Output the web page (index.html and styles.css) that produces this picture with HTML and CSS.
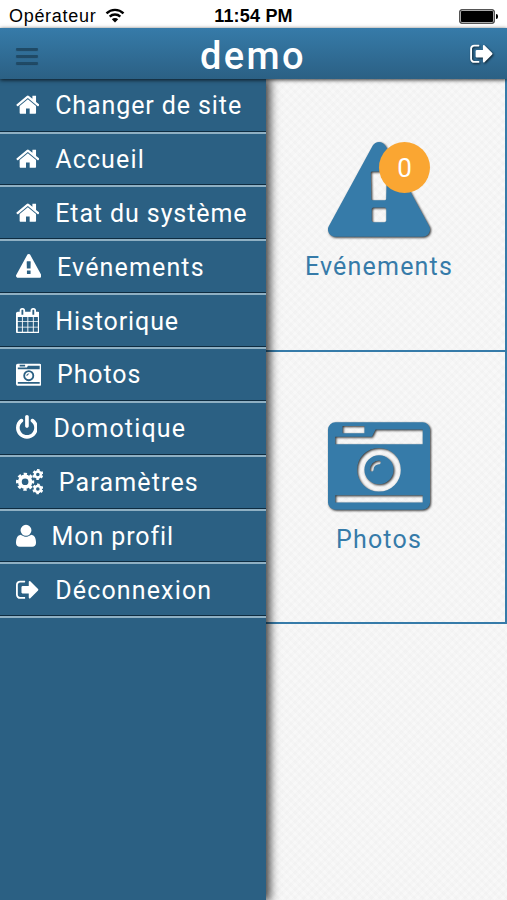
FILE: index.html
```html
<!DOCTYPE html>
<html lang="fr">
<head>
  <meta charset="utf-8">
  <meta name="viewport" content="width=device-width, initial-scale=1">
  <title>demo</title>
  <link rel="stylesheet" href="styles.css">
</head>
<body>
  <svg class="sprite">
    <symbol id="home" viewBox="64 0 1664 1792">
      <path d="M1472 992v480q0 26-19 45t-45 19h-384v-384h-256v384h-384q-26 0-45-19t-19-45v-480q0-1 .5-3t.5-3l575-474 575 474q1 2 1 6zm223-69l-62 74q-8 9-21 11h-3q-13 0-21-7l-692-577-692 577q-12 8-24 7-13-2-21-11l-62-74q-8-10-7-23.5t11-21.5l719-599q32-26 76-26t76 26l244 204v-195q0-14 9-23t23-9h192q14 0 23 9t9 23v408l219 182q10 8 11 21.500t-7 23.500z"/>
    </symbol>
    <symbol id="warning" viewBox="0 0 1792 1792">
      <path d="M1024 1375v-190q0-14-9.500-23.500t-22.500-9.500h-192q-13 0-22.500 9.500t-9.500 23.500v190q0 14 9.500 23.500t22.500 9.500h192q13 0 22.500-9.500t9.500-23.500zm-2-374l10-459q0-12-6-19-9-5-20-5h-228q-11 0-20 5-6 7-6 21l9 457q0 10 10 16.500t24 6.500h193q14 0 23.500-6.500t10.500-16.500zm-14-934l768 1408q35 63-2 126-17 29-46.500 46t-63.500 17h-1536q-34 0-63.500-17t-46.500-46q-37-63-2-126l768-1408q17-31 47-49t65-18 65 18 47 49z"/>
    </symbol>
    <symbol id="calendar" viewBox="64 0 1664 1792">
      <path d="M192 1664h288v-288h-288v288zm352 0h320v-288h-320v288zm-352-352h288v-320h-288v320zm352 0h320v-320h-320v320zm-352-384h288v-288h-288v288zm736 736h320v-288h-320v288zm-384-736h320v-288h-320v288zm768 736h288v-288h-288v288zm-384-352h320v-320h-320v320zm-352-864v-288q0-13-9.500-22.500t-22.500-9.500h-64q-13 0-22.500 9.500t-9.500 22.500v288q0 13 9.500 22.500t22.500 9.500h64q13 0 22.500-9.500t9.500-22.500zm736 864h288v-320h-288v320zm-384-384h320v-288h-320v288zm384 0h288v-288h-288v288zm32-480v-288q0-13-9.500-22.500t-22.500-9.500h-64q-13 0-22.500 9.500t-9.500 22.500v288q0 13 9.500 22.500t22.500 9.500h64q13 0 22.500-9.500t9.500-22.500zm384-64v1280q0 52-38 90t-90 38h-1408q-52 0-90-38t-38-90v-1280q0-52 38-90t90-38h128v-96q0-66 47-113t113-47h64q66 0 113 47t47 113v96h384v-96q0-66 47-113t113-47h64q66 0 113 47t47 113v96h128q52 0 90 38t38 90z"/>
    </symbol>
    <symbol id="camera" viewBox="0 0 1792 1792">
      <path d="M928 832q0-14-9-23t-23-9q-66 0-113 47t-47 113q0 14 9 23t23 9 23-9 9-23q0-40 28-68t68-28q14 0 23-9t9-23zm224 130q0 106-75 181t-181 75-181-75-75-181 75-181 181-75 181 75 75 181zm-1024 574h1536v-128h-1536v128zm1152-574q0-159-112.500-271.500t-271.500-112.500-271.500 112.500-112.500 271.500 112.500 271.500 271.500 112.500 271.500-112.500 112.500-271.500zm-1024-642h384v-128h-384v128zm-128 192h1536v-256h-828l-64 128h-644v128zm1664-256v1280q0 53-37.500 90.500t-90.500 37.500h-1536q-53 0-90.500-37.500t-37.500-90.500v-1280q0-53 37.500-90.500t90.500-37.500h1536q53 0 90.500 37.500t37.500 90.500z"/>
    </symbol>
    <symbol id="power" viewBox="128 0 1536 1792">
      <path d="M1664 896q0 156-61 298t-164 245-245 164-298 61-298-61-245-164-164-245-61-298q0-182 80.500-343t226.500-270q43-32 95.500-25t83.500 50q32 42 24.500 94.500t-49.500 84.500q-98 74-151.500 181t-53.500 228q0 104 40.500 198.500t109.500 163.500 163.500 109.500 198.500 40.500 198.500-40.500 163.500-109.500 109.500-163.500 40.500-198.500q0-121-53.500-228t-151.500-181q-42-32-49.500-84.500t24.500-94.500q31-43 84-50t95 25q146 109 226.500 270t80.500 343zm-640-768v640q0 52-38 90t-90 38-90-38-38-90v-640q0-52 38-90t90-38 90 38 38 90z"/>
    </symbol>
    <symbol id="cogs" viewBox="0 0 1920 1792">
      <g class="cog">
        <circle cx="640" cy="896" r="370" stroke-width="270"/>
        <circle cx="640" cy="896" r="550" stroke-width="180" pathLength="80" stroke-dasharray="5.400 4.600" stroke-dashoffset="2.700"/>
        <circle cx="1536" cy="384" r="210" stroke-width="170"/>
        <circle cx="1536" cy="384" r="320" stroke-width="130" pathLength="60" stroke-dasharray="5.400 4.600" stroke-dashoffset="7.700"/>
        <circle cx="1536" cy="1408" r="210" stroke-width="170"/>
        <circle cx="1536" cy="1408" r="320" stroke-width="130" pathLength="60" stroke-dasharray="5.400 4.600" stroke-dashoffset="7.700"/>
      </g>
    </symbol>
    <symbol id="user" viewBox="192 0 1408 1792">
      <path d="M1600 1405q0 120-73 189.500t-194 69.500h-874q-121 0-194-69.500t-73-189.500q0-53 3.500-103.500t14-109 26.500-108.500 43-97.500 62-81 85.500-53.500 111.500-20q9 0 42 21.500t74.500 48 108 48 133.500 21.500 133.500-21.500 108-48 74.500-48 42-21.500q61 0 111.500 20t85.500 53.500 62 81 43 97.500 26.500 108.500 14 109 3.500 103.500zm-320-893q0 159-112.500 271.500t-271.500 112.500-271.500-112.500-112.500-271.500 112.500-271.500 271.500-112.500 271.500 112.500 112.500 271.500z"/>
    </symbol>
    <symbol id="signout" viewBox="64 0 1664 1792">
      <path d="M704 1440q0 4 1 20t.5 26.500-3 23.500-10 19.500-20.500 6.500h-320q-119 0-203.500-84.500t-84.500-203.500v-704q0-119 84.500-203.500t203.500-84.500h320q13 0 22.500 9.500t9.500 22.500q0 4 1 20t.5 26.500-3 23.500-10 19.500-20.500 6.500h-320q-66 0-113 47t-47 113v704q0 66 47 113t113 47h312l11.500 1 11.500 3 8 5.500 7 9 2 13.500zm928-544q0 26-19 45l-544 544q-19 19-45 19t-45-19-19-45v-288h-448q-26 0-45-19t-19-45v-384q0-26 19-45t45-19h448v-288q0-26 19-45t45-19 45 19l544 544q19 19 19 45z"/>
    </symbol>
  </svg>

  <div class="statusbar">
    <div class="carrier">
      <span>Opérateur</span>
      <svg class="wifi" viewBox="0 0 20 15">
        <path d="M1.500 5.300a12.200 12.200 0 0 1 17 0M4.700 8.700a7.600 7.600 0 0 1 10.600 0"/>
        <path class="wifi-dot" d="M10 14.500l-3.200-3.200a4.600 4.600 0 0 1 6.400 0z"/>
      </svg>
    </div>
    <div class="time">11:54 PM</div>
    <div class="battery">
      <div class="battery-body"></div>
      <div class="battery-tip"></div>
    </div>
  </div>

  <div class="header">
    <div class="burger"><i></i><i></i><i></i></div>
    <h1 class="title">demo</h1>
    <svg class="icon logout"><use href="#signout"/></svg>
  </div>

  <div class="main">
    <ul class="menu">
      <li class="tight"><svg class="icon w-1664"><use href="#home"/></svg><span>Changer de site</span></li>
      <li><svg class="icon w-1664"><use href="#home"/></svg><span>Accueil</span></li>
      <li class="tight"><svg class="icon w-1664"><use href="#home"/></svg><span>Etat du système</span></li>
      <li><svg class="icon w-1792"><use href="#warning"/></svg><span>Evénements</span></li>
      <li class="tight"><svg class="icon w-1664"><use href="#calendar"/></svg><span>Historique</span></li>
      <li class="tight"><svg class="icon w-1792"><use href="#camera"/></svg><span>Photos</span></li>
      <li><svg class="icon w-1536"><use href="#power"/></svg><span>Domotique</span></li>
      <li><svg class="icon w-1920"><use href="#cogs"/></svg><span>Paramètres</span></li>
      <li class="tight"><svg class="icon w-1408"><use href="#user"/></svg><span>Mon profil</span></li>
      <li><svg class="icon w-1664"><use href="#signout"/></svg><span>Déconnexion</span></li>
    </ul>
    <div class="content">
      <div class="tile tile-events">
        <div class="tile-icon">
          <svg><use href="#warning"/></svg>
          <span class="badge">0</span>
        </div>
        <div class="tile-label">Evénements</div>
      </div>
      <div class="tile tile-photos">
        <div class="tile-icon">
          <svg><use href="#camera"/></svg>
        </div>
        <div class="tile-label tight">Photos</div>
      </div>
    </div>
  </div>
</body>
</html>
```

FILE: styles.css
```css
* {
    box-sizing: border-box;
}
body {
    margin: 0;
    height: 100vh;
    display: flex;
    flex-direction: column;
    overflow: hidden;
    font-family: Roboto, sans-serif;
    background-color: #f7f7f7;
}
.sprite {
    display: none;
}
.cog {
    fill: none;
    stroke: #fff;
}

/* status bar */
.statusbar {
    flex: 0 0 28px;
    display: grid;
    grid-template-columns: 1fr auto 1fr;
    align-items: center;
    padding: 4px 9px 0 9px;
    background-color: #fff;
    color: #000;
    font-family: "Liberation Sans", sans-serif;
    font-size: 18px;
    line-height: 24px;
}
.carrier {
    display: flex;
    align-items: center;
    gap: 9px;
    letter-spacing: 0.700px;
}
.wifi {
    width: 20px;
    height: 15px;
    margin-top: -2px;
    fill: none;
    stroke: #000;
    stroke-width: 2.4;
}
.wifi-dot {
    fill: #000;
    stroke: none;
}
.time {
    font-weight: bold;
    letter-spacing: 0.200px;
}
.battery {
    display: flex;
    align-items: center;
    justify-content: flex-end;
    gap: 1px;
}
.battery-body {
    width: 36px;
    height: 15px;
    border: 1px solid #555;
    border-radius: 3px;
    background-color: #000;
    box-shadow: inset 0 0 0 1px #aaa;
}
.battery-tip {
    width: 2px;
    height: 5px;
    border-radius: 0 2px 2px 0;
    background-color: #000;
}

/* header */
.header {
    flex: 0 0 51px;
    display: flex;
    align-items: center;
    justify-content: space-between;
    padding: 0 13px 0 16px;
    background: linear-gradient(#367ba9, #2b6084);
    box-shadow: 0 1px 4px rgba(0, 0, 0, 0.8);
    color: #fff;
    z-index: 3;
}
.burger {
    display: flex;
    flex-direction: column;
    gap: 5px;
    width: 22px;
    padding-top: 4px;
}
.burger i {
    height: 2px;
    border-radius: 1px;
    background-color: #1f4a66;
    box-shadow: 0 1px 1px rgba(0, 0, 0, 0.35);
}
.title {
    margin: 0;
    padding-top: 5px;
    font-size: 38px;
    font-weight: 500;
    letter-spacing: 2.400px;
    transform: translateX(-1px);
}
.icon {
    flex: none;
    height: 25.5px;
    fill: #fff;
}
.logout {
    width: 24px;
    filter: drop-shadow(1px 1px 1px rgba(0, 0, 0, 0.7));
}

.main {
    flex: 1;
    display: flex;
}

/* side menu */
.menu {
    flex: 0 0 266px;
    margin: 0;
    padding: 0;
    list-style: none;
    background-color: #2b6083;
    box-shadow: 3px 0 9px 1px rgba(0, 0, 0, 0.75);
    z-index: 2;
}
.menu li {
    display: flex;
    align-items: center;
    gap: 16px;
    height: 53.870px;
    padding-left: 15.500px;
    border-top: 2px solid #8fb0c3;
    border-bottom: 1px solid #0e2c40;
    color: #fff;
    font-size: 25px;
    letter-spacing: 1.150px;
    white-space: nowrap;
}
.menu li:first-child {
    height: 52.500px;
    border-top: 0;
}
.menu li:last-child {
    box-shadow: 0 2px #8fb0c3;
}
.menu span {
    padding-top: 1px;
}
.menu .tight, .tight {
    letter-spacing: 0.900px;
}
.w-1408 { width: 20px; }
.w-1536 { width: 21.900px; }
.w-1664 { width: 23.700px; }
.w-1792 { width: 25.500px; }
.w-1920 { width: 27.300px; }

/* tiles, the left edge slides under the menu */
.content {
    flex: 1;
    margin-left: -13px;
    background-color: #f8f8f8;
    background-image:
        repeating-linear-gradient(45deg, rgba(0, 0, 0, 0.01) 0 3px, transparent 3px 6px),
        repeating-linear-gradient(-45deg, rgba(0, 0, 0, 0.01) 0 3px, transparent 3px 6px);
}
.tile {
    display: flex;
    flex-direction: column;
    align-items: center;
    height: 272.500px;
    border-right: 2px solid #367ba9;
    border-bottom: 2px solid #367ba9;
    color: #367ba9;
}
.tile-events {
    padding-top: 63px;
}
.tile-photos {
    padding-top: 63.500px;
}
.tile-icon {
    position: relative;
    width: 102px;
    height: 102px;
}
.tile-icon svg {
    width: 102px;
    height: 102px;
    fill: #367ba9;
    filter: drop-shadow(1px 1px 1px rgba(0, 0, 0, 0.8));
}
.badge {
    position: absolute;
    top: 0;
    right: 0;
    width: 51px;
    height: 51px;
    border-radius: 50%;
    background-color: #faa632;
    color: #fff;
    font-size: 26px;
    line-height: 52px;
    text-align: center;
}
.tile-label {
    margin-top: 8px;
    font-size: 25px;
    line-height: 30px;
    letter-spacing: 1.200px;
}
```
